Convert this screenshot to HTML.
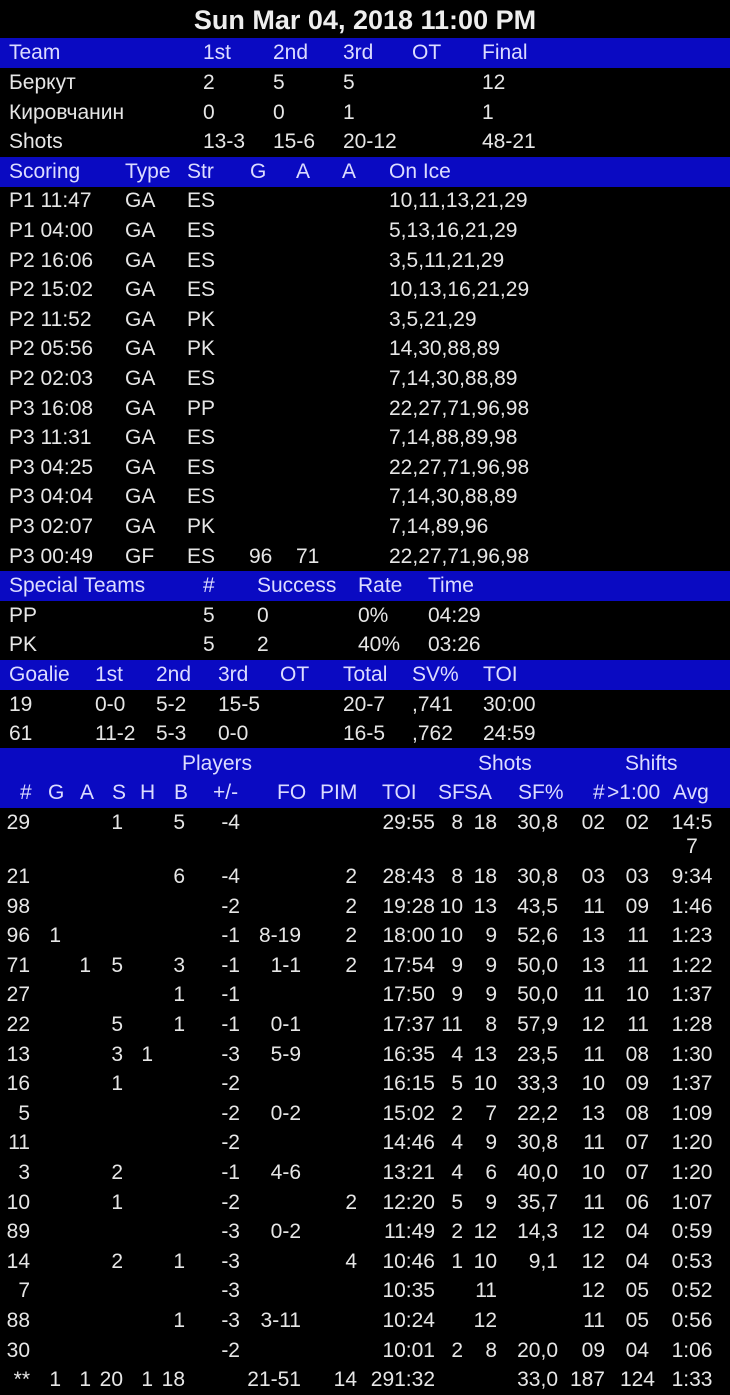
<!DOCTYPE html>
<html><head><meta charset="utf-8">
<style>
html,body{margin:0;padding:0;background:#000;}
body{width:730px;height:1393px;position:relative;overflow:hidden;font-family:"Liberation Sans","DejaVu Sans",sans-serif;font-size:21px;color:#e6e6e6;}
.t{position:absolute;left:0;top:2px;width:730px;text-align:center;font-weight:bold;font-size:27px;line-height:36px;color:#eee;}
.band{position:absolute;left:0;width:730px;background:#0a0ac2;}
.r{position:absolute;left:0;width:730px;height:30px;line-height:30px;white-space:nowrap;}
.h{color:#dcdcff;}
.r i{font-style:normal;position:absolute;top:0;}
.r b{font-weight:normal;position:absolute;top:0;width:70px;text-align:right;}
.p0{left:-40px}.p1{left:-9px}.p2{left:21px}.p3{left:53px}.p4{left:83px}.p5{left:115px}
.p6{left:170px}.p7{left:231px}.p8{left:287px}.p9{left:365px}.p10{left:393px}.p11{left:427px}
.p12{left:488px}.p13{left:535px}.p14{left:579px}
.r b.p15{left:657px;text-align:center;}
</style></head><body>
<div class="t">Sun Mar 04, 2018 11:00 PM</div>

<div class="band" style="top:38px;height:30px"></div>
<div class="band" style="top:157px;height:30px"></div>
<div class="band" style="top:571px;height:30px"></div>
<div class="band" style="top:660px;height:30px"></div>
<div class="band" style="top:748px;height:60px"></div>

<div class="r h" style="top:38px"><i style="left:9px">Team</i><i style="left:203px">1st</i><i style="left:273px">2nd</i><i style="left:343px">3rd</i><i style="left:412px">OT</i><i style="left:482px">Final</i></div>
<div class="r" style="top:68px"><i style="left:9px">Беркут</i><i style="left:203px">2</i><i style="left:273px">5</i><i style="left:343px">5</i><i style="left:482px">12</i></div>
<div class="r" style="top:97.6px"><i style="left:9px">Кировчанин</i><i style="left:203px">0</i><i style="left:273px">0</i><i style="left:343px">1</i><i style="left:482px">1</i></div>
<div class="r" style="top:127.2px"><i style="left:9px">Shots</i><i style="left:203px">13-3</i><i style="left:273px">15-6</i><i style="left:343px">20-12</i><i style="left:482px">48-21</i></div>

<div class="r h" style="top:156.8px"><i style="left:9px">Scoring</i><i style="left:125px">Type</i><i style="left:187px">Str</i><i style="left:250px">G</i><i style="left:296px">A</i><i style="left:342px">A</i><i style="left:389px">On Ice</i></div>
<div class="r" style="top:186.4px"><i style="left:9px">P1 11:47</i><i style="left:125px">GA</i><i style="left:187px">ES</i><i style="left:389px">10,11,13,21,29</i></div>
<div class="r" style="top:216px"><i style="left:9px">P1 04:00</i><i style="left:125px">GA</i><i style="left:187px">ES</i><i style="left:389px">5,13,16,21,29</i></div>
<div class="r" style="top:245.6px"><i style="left:9px">P2 16:06</i><i style="left:125px">GA</i><i style="left:187px">ES</i><i style="left:389px">3,5,11,21,29</i></div>
<div class="r" style="top:275.2px"><i style="left:9px">P2 15:02</i><i style="left:125px">GA</i><i style="left:187px">ES</i><i style="left:389px">10,13,16,21,29</i></div>
<div class="r" style="top:304.8px"><i style="left:9px">P2 11:52</i><i style="left:125px">GA</i><i style="left:187px">PK</i><i style="left:389px">3,5,21,29</i></div>
<div class="r" style="top:334.4px"><i style="left:9px">P2 05:56</i><i style="left:125px">GA</i><i style="left:187px">PK</i><i style="left:389px">14,30,88,89</i></div>
<div class="r" style="top:364px"><i style="left:9px">P2 02:03</i><i style="left:125px">GA</i><i style="left:187px">ES</i><i style="left:389px">7,14,30,88,89</i></div>
<div class="r" style="top:393.6px"><i style="left:9px">P3 16:08</i><i style="left:125px">GA</i><i style="left:187px">PP</i><i style="left:389px">22,27,71,96,98</i></div>
<div class="r" style="top:423.2px"><i style="left:9px">P3 11:31</i><i style="left:125px">GA</i><i style="left:187px">ES</i><i style="left:389px">7,14,88,89,98</i></div>
<div class="r" style="top:452.8px"><i style="left:9px">P3 04:25</i><i style="left:125px">GA</i><i style="left:187px">ES</i><i style="left:389px">22,27,71,96,98</i></div>
<div class="r" style="top:482.4px"><i style="left:9px">P3 04:04</i><i style="left:125px">GA</i><i style="left:187px">ES</i><i style="left:389px">7,14,30,88,89</i></div>
<div class="r" style="top:512px"><i style="left:9px">P3 02:07</i><i style="left:125px">GA</i><i style="left:187px">PK</i><i style="left:389px">7,14,89,96</i></div>
<div class="r" style="top:541.6px"><i style="left:9px">P3 00:49</i><i style="left:125px">GF</i><i style="left:187px">ES</i><i style="left:249px">96</i><i style="left:296px">71</i><i style="left:389px">22,27,71,96,98</i></div>

<div class="r h" style="top:571.2px"><i style="left:9px">Special Teams</i><i style="left:203px">#</i><i style="left:257px">Success</i><i style="left:358px">Rate</i><i style="left:428px">Time</i></div>
<div class="r" style="top:600.8px"><i style="left:9px">PP</i><i style="left:203px">5</i><i style="left:257px">0</i><i style="left:358px">0%</i><i style="left:428px">04:29</i></div>
<div class="r" style="top:630.4px"><i style="left:9px">PK</i><i style="left:203px">5</i><i style="left:257px">2</i><i style="left:358px">40%</i><i style="left:428px">03:26</i></div>

<div class="r h" style="top:660px"><i style="left:9px">Goalie</i><i style="left:95px">1st</i><i style="left:156px">2nd</i><i style="left:218px">3rd</i><i style="left:280px">OT</i><i style="left:343px">Total</i><i style="left:412px">SV%</i><i style="left:483px">TOI</i></div>
<div class="r" style="top:689.6px"><i style="left:9px">19</i><i style="left:95px">0-0</i><i style="left:156px">5-2</i><i style="left:218px">15-5</i><i style="left:343px">20-7</i><i style="left:412px">,741</i><i style="left:483px">30:00</i></div>
<div class="r" style="top:719.2px"><i style="left:9px">61</i><i style="left:95px">11-2</i><i style="left:156px">5-3</i><i style="left:218px">0-0</i><i style="left:343px">16-5</i><i style="left:412px">,762</i><i style="left:483px">24:59</i></div>

<div class="r h" style="top:748.8px"><i style="left:182px">Players</i><i style="left:478px">Shots</i><i style="left:625px">Shifts</i></div>
<div class="r h" style="top:778.4px"><i style="left:20px">#</i><i style="left:48px">G</i><i style="left:80px">A</i><i style="left:112px">S</i><i style="left:140px">H</i><i style="left:174px">B</i><i style="left:213px">+/-</i><i style="left:277px">FO</i><i style="left:320px">PIM</i><i style="left:382px">TOI</i><i style="left:438px">SF</i><i style="left:464px">SA</i><i style="left:518px">SF%</i><i style="left:593px">#</i><i style="left:607px">&gt;1:00</i><i style="left:673px">Avg</i></div>

<div class="r" style="top:808px"><b class="p0">29</b><b class="p3">1</b><b class="p5">5</b><b class="p6">-4</b><b class="p9">29:55</b><b class="p10">8</b><b class="p11">18</b><b class="p12">30,8</b><b class="p13">02</b><b class="p14">02</b><b class="p15">14:5</b></div>
<div class="r" style="top:832px"><b class="p15">7</b></div>
<div class="r" style="top:862px"><b class="p0">21</b><b class="p5">6</b><b class="p6">-4</b><b class="p8">2</b><b class="p9">28:43</b><b class="p10">8</b><b class="p11">18</b><b class="p12">30,8</b><b class="p13">03</b><b class="p14">03</b><b class="p15">9:34</b></div>
<div class="r" style="top:891.6px"><b class="p0">98</b><b class="p6">-2</b><b class="p8">2</b><b class="p9">19:28</b><b class="p10">10</b><b class="p11">13</b><b class="p12">43,5</b><b class="p13">11</b><b class="p14">09</b><b class="p15">1:46</b></div>
<div class="r" style="top:921.2px"><b class="p0">96</b><b class="p1">1</b><b class="p6">-1</b><b class="p7">8-19</b><b class="p8">2</b><b class="p9">18:00</b><b class="p10">10</b><b class="p11">9</b><b class="p12">52,6</b><b class="p13">13</b><b class="p14">11</b><b class="p15">1:23</b></div>
<div class="r" style="top:950.8px"><b class="p0">71</b><b class="p2">1</b><b class="p3">5</b><b class="p5">3</b><b class="p6">-1</b><b class="p7">1-1</b><b class="p8">2</b><b class="p9">17:54</b><b class="p10">9</b><b class="p11">9</b><b class="p12">50,0</b><b class="p13">13</b><b class="p14">11</b><b class="p15">1:22</b></div>
<div class="r" style="top:980.4px"><b class="p0">27</b><b class="p5">1</b><b class="p6">-1</b><b class="p9">17:50</b><b class="p10">9</b><b class="p11">9</b><b class="p12">50,0</b><b class="p13">11</b><b class="p14">10</b><b class="p15">1:37</b></div>
<div class="r" style="top:1010px"><b class="p0">22</b><b class="p3">5</b><b class="p5">1</b><b class="p6">-1</b><b class="p7">0-1</b><b class="p9">17:37</b><b class="p10">11</b><b class="p11">8</b><b class="p12">57,9</b><b class="p13">12</b><b class="p14">11</b><b class="p15">1:28</b></div>
<div class="r" style="top:1039.6px"><b class="p0">13</b><b class="p3">3</b><b class="p4">1</b><b class="p6">-3</b><b class="p7">5-9</b><b class="p9">16:35</b><b class="p10">4</b><b class="p11">13</b><b class="p12">23,5</b><b class="p13">11</b><b class="p14">08</b><b class="p15">1:30</b></div>
<div class="r" style="top:1069.2px"><b class="p0">16</b><b class="p3">1</b><b class="p6">-2</b><b class="p9">16:15</b><b class="p10">5</b><b class="p11">10</b><b class="p12">33,3</b><b class="p13">10</b><b class="p14">09</b><b class="p15">1:37</b></div>
<div class="r" style="top:1098.8px"><b class="p0">5</b><b class="p6">-2</b><b class="p7">0-2</b><b class="p9">15:02</b><b class="p10">2</b><b class="p11">7</b><b class="p12">22,2</b><b class="p13">13</b><b class="p14">08</b><b class="p15">1:09</b></div>
<div class="r" style="top:1128.4px"><b class="p0">11</b><b class="p6">-2</b><b class="p9">14:46</b><b class="p10">4</b><b class="p11">9</b><b class="p12">30,8</b><b class="p13">11</b><b class="p14">07</b><b class="p15">1:20</b></div>
<div class="r" style="top:1158px"><b class="p0">3</b><b class="p3">2</b><b class="p6">-1</b><b class="p7">4-6</b><b class="p9">13:21</b><b class="p10">4</b><b class="p11">6</b><b class="p12">40,0</b><b class="p13">10</b><b class="p14">07</b><b class="p15">1:20</b></div>
<div class="r" style="top:1187.6px"><b class="p0">10</b><b class="p3">1</b><b class="p6">-2</b><b class="p8">2</b><b class="p9">12:20</b><b class="p10">5</b><b class="p11">9</b><b class="p12">35,7</b><b class="p13">11</b><b class="p14">06</b><b class="p15">1:07</b></div>
<div class="r" style="top:1217.2px"><b class="p0">89</b><b class="p6">-3</b><b class="p7">0-2</b><b class="p9">11:49</b><b class="p10">2</b><b class="p11">12</b><b class="p12">14,3</b><b class="p13">12</b><b class="p14">04</b><b class="p15">0:59</b></div>
<div class="r" style="top:1246.8px"><b class="p0">14</b><b class="p3">2</b><b class="p5">1</b><b class="p6">-3</b><b class="p8">4</b><b class="p9">10:46</b><b class="p10">1</b><b class="p11">10</b><b class="p12">9,1</b><b class="p13">12</b><b class="p14">04</b><b class="p15">0:53</b></div>
<div class="r" style="top:1276.4px"><b class="p0">7</b><b class="p6">-3</b><b class="p9">10:35</b><b class="p11">11</b><b class="p13">12</b><b class="p14">05</b><b class="p15">0:52</b></div>
<div class="r" style="top:1306px"><b class="p0">88</b><b class="p5">1</b><b class="p6">-3</b><b class="p7">3-11</b><b class="p9">10:24</b><b class="p11">12</b><b class="p13">11</b><b class="p14">05</b><b class="p15">0:56</b></div>
<div class="r" style="top:1335.6px"><b class="p0">30</b><b class="p6">-2</b><b class="p9">10:01</b><b class="p10">2</b><b class="p11">8</b><b class="p12">20,0</b><b class="p13">09</b><b class="p14">04</b><b class="p15">1:06</b></div>
<div class="r" style="top:1365.2px"><b class="p0">**</b><b class="p1">1</b><b class="p2">1</b><b class="p3">20</b><b class="p4">1</b><b class="p5">18</b><b class="p7">21-51</b><b class="p8">14</b><b class="p9">291:32</b><b class="p12">33,0</b><b class="p13">187</b><b class="p14" style="left:585px">124</b><b class="p15">1:33</b></div>
</body></html>
